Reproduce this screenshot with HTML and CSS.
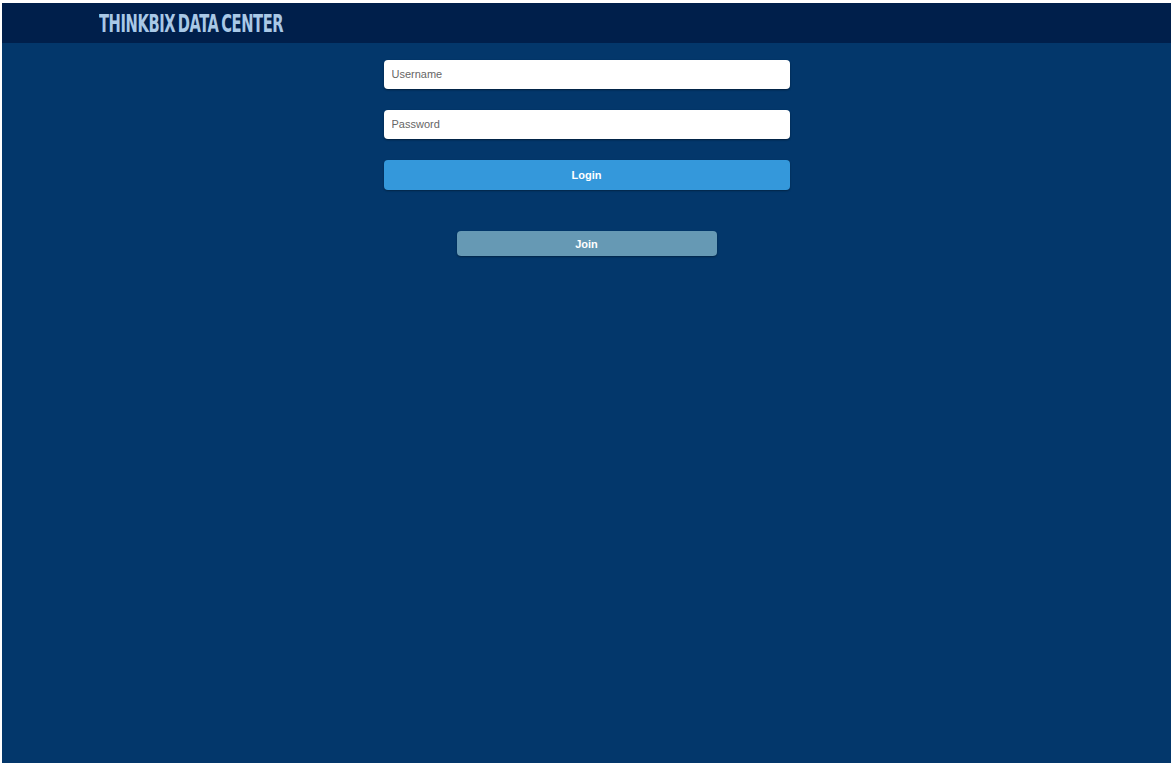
FILE: index.html
```html
<!DOCTYPE html>
<html>
<head>
<meta charset="utf-8">
<link rel="stylesheet" href="styles.css">
</head>
<body>
<div class="page">
  <header class="topbar">
    <span class="brand">THINKBIX DATA CENTER</span>
  </header>
  <main class="main">
    <form class="login">
      <input class="field" type="text" placeholder="Username">
      <input class="field" type="password" placeholder="Password">
      <button class="btn-login" type="button">Login</button>
    </form>
    <button class="btn-join" type="button">Join</button>
  </main>
</div>
</body>
</html>
```

FILE: styles.css
```css
html, body { height: 100%; }
body {
  margin: 0;
  padding: 3px 2px 1px 2px;
  box-sizing: border-box;
  background: #ffffff;
  font-family: "Liberation Sans", Arial, sans-serif;
}
.page {
  height: 100%;
  display: flex;
  flex-direction: column;
  background: #03376b;
}
.topbar {
  height: 40px;
  flex: 0 0 40px;
  background: #001f4b;
  display: flex;
  align-items: center;
  padding-left: 97px;
}
.brand {
  display: inline-block;
  font-family: "DejaVu Sans", sans-serif;
  font-weight: bold;
  font-stretch: condensed;
  font-size: 24px;
  color: #a9c8e6;
  transform: scaleX(0.68);
  transform-origin: left center;
  letter-spacing: -0.6px;
  word-spacing: -3px;
  margin-top: 1px;
}
.main {
  flex: 1;
  display: flex;
  flex-direction: column;
  align-items: center;
  padding-top: 17px;
}
.login {
  width: 406px;
  display: flex;
  flex-direction: column;
  gap: 21px;
}
.field {
  height: 29px;
  box-sizing: border-box;
  border: none;
  border-radius: 4px;
  background: #ffffff;
  padding: 0 8px 1px 8px;
  font-family: "Liberation Sans", Arial, sans-serif;
  font-size: 11px;
  color: #333;
  box-shadow: 0 1px 2px rgba(0,0,0,0.45);
  outline: none;
}
.field::placeholder { color: #666; }
.btn-login {
  height: 30px;
  border: none;
  border-radius: 4px;
  background: #3498db;
  color: #fff;
  font-family: "Liberation Sans", Arial, sans-serif;
  font-weight: bold;
  font-size: 11px;
  box-shadow: 0 1px 2px rgba(0,0,0,0.35);
}
.btn-join {
  margin-top: 41px;
  width: 260px;
  height: 25px;
  border: none;
  border-radius: 4px;
  background: #6699b4;
  color: #fff;
  font-family: "Liberation Sans", Arial, sans-serif;
  font-weight: bold;
  font-size: 11px;
  box-shadow: 0 1px 2px rgba(0,0,0,0.35);
}
```
